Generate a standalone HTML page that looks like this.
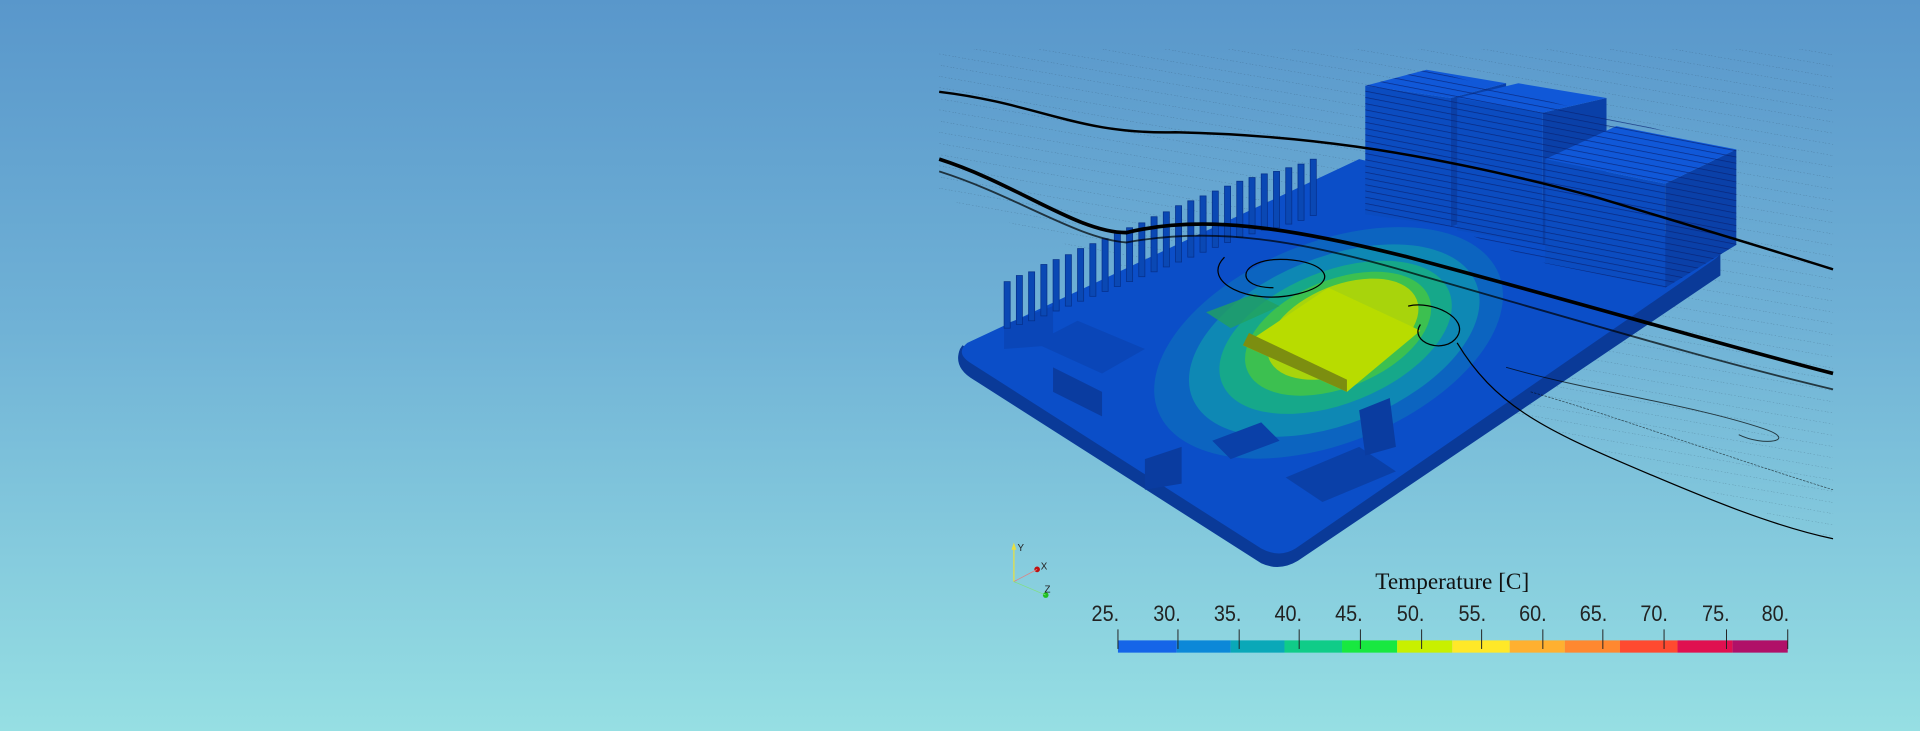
<!DOCTYPE html>
<html><head><meta charset="utf-8"><style>
html,body{margin:0;padding:0;width:1920px;height:731px;overflow:hidden;background:linear-gradient(180deg,#5997cb 0%,#70b2d6 45%,#96dfe3 100%);font-family:"Liberation Sans",sans-serif}
svg{position:absolute;left:0;top:0}
</style></head><body>
<svg width="1920" height="731" viewBox="0 0 1568 597" xmlns="http://www.w3.org/2000/svg">
<defs>
<pattern id="hl" width="8" height="9" patternUnits="userSpaceOnUse" patternTransform="rotate(10)">
<line x1="0" y1="0" x2="8" y2="0" stroke="#1a2a40" stroke-width="0.5" stroke-dasharray="1 2" opacity="0.6"/>
</pattern>
<pattern id="blk" width="10" height="5" patternUnits="userSpaceOnUse" patternTransform="rotate(11)">
<line x1="0" y1="0" x2="10" y2="0" stroke="#082070" stroke-width="1.2" opacity="0.8"/>
</pattern>
</defs>
<polygon points="767,40 1497,40 1497,440 767,160" fill="url(#hl)" opacity="0.7"/>
<!-- board sides -->
<path d="M784,285 Q778,300 795,310 L1030,460 Q1045,467 1060,458 L1405,225 L1405,205 L1045,448 L786,282 Z" fill="#0a3a98"/>
<!-- board top -->
<path d="M790,280 Q780,288 792,296 L1030,448 Q1045,456 1058,448 L1400,212 Q1410,205 1398,200 L1110,130 Z" fill="#0b4ec8"/>
<!-- heat contours -->
<g transform="rotate(-22 1085 280)">
<ellipse cx="1085" cy="280" rx="150" ry="82" fill="#0c64c0"/>
<ellipse cx="1090" cy="280" rx="125" ry="68" fill="#0e88b4"/>
<ellipse cx="1092" cy="278" rx="100" ry="54" fill="#16a88a"/>
<ellipse cx="1095" cy="276" rx="80" ry="44" fill="#3cc050"/>
<ellipse cx="1100" cy="274" rx="65" ry="36" fill="#a8d40c"/>
</g>
<!-- chip -->
<polygon points="1015,282 1085,235 1160,270 1100,320" fill="#b8dc00"/>
<polygon points="1015,282 1100,320 1100,310 1020,272" fill="#7c8e10"/>
<polygon points="985,255 1025,240 1045,250 1005,268" fill="#22a060" opacity="0.8"/>
<!-- small components -->
<polygon points="845,280 880,262 935,285 900,305" fill="#0a46b8"/>
<polygon points="860,300 900,320 900,340 860,320" fill="#0a3ca0"/>
<polygon points="935,375 965,365 965,395 935,400" fill="#0a3ca0"/>
<polygon points="1050,390 1110,365 1140,385 1080,410" fill="#0a40a8"/>
<polygon points="1110,335 1135,325 1140,365 1115,372" fill="#0a3ca0"/>
<polygon points="990,360 1030,345 1045,360 1005,375" fill="#0a40a8"/>
<polygon points="820,265 860,250 860,282 820,285" fill="#0a46b8"/>
<g fill="#0a48b4" stroke="#06308a" stroke-width="0.6">
<rect x="820" y="230" width="5" height="38"/><rect x="830" y="225" width="5" height="40"/><rect x="840" y="222" width="5" height="40"/><rect x="850" y="216" width="5" height="42"/><rect x="860" y="212" width="5" height="42"/><rect x="870" y="208" width="5" height="42"/><rect x="880" y="203" width="5" height="43"/><rect x="890" y="199" width="5" height="43"/><rect x="900" y="195" width="5" height="43"/><rect x="910" y="190" width="5" height="44"/><rect x="920" y="186" width="5" height="44"/><rect x="930" y="182" width="5" height="44"/><rect x="940" y="177" width="5" height="45"/><rect x="950" y="173" width="5" height="45"/><rect x="960" y="168" width="5" height="46"/><rect x="970" y="164" width="5" height="46"/><rect x="980" y="160" width="5" height="46"/><rect x="990" y="156" width="5" height="46"/><rect x="1000" y="152" width="5" height="46"/><rect x="1010" y="148" width="5" height="46"/><rect x="1020" y="145" width="5" height="46"/><rect x="1030" y="142" width="5" height="46"/><rect x="1040" y="140" width="5" height="46"/><rect x="1050" y="137" width="5" height="46"/><rect x="1060" y="134" width="5" height="46"/><rect x="1070" y="130" width="5" height="46"/>
</g>
<g>
<polygon points="1115,70 1185,80 1185,185 1115,175" fill="#0b4cc0"/>
<polygon points="1185,80 1230,68 1230,170 1185,185" fill="#0a40a8"/>
<polygon points="1115,70 1165,57 1230,68 1185,80" fill="#1058d8"/>
<polygon points="1190,80 1260,92 1260,200 1190,188" fill="#0b4cc0"/>
<polygon points="1260,92 1312,80 1312,180 1260,200" fill="#0a40a8"/>
<polygon points="1190,80 1240,68 1312,80 1260,92" fill="#1058d8"/>
<polygon points="1262,130 1360,150 1360,235 1262,215" fill="#0b4cc0"/>
<polygon points="1360,150 1418,122 1418,200 1360,235" fill="#0a40a8"/>
<polygon points="1262,130 1320,103 1418,122 1360,150" fill="#1058d8"/>
<polygon points="1115,70 1165,57 1418,122 1418,200 1360,235 1262,215 1190,188 1115,175" fill="url(#blk)"/>
</g>
<g fill="none" stroke="#000">
<path d="M767,75 C850,85 880,110 960,108 C1050,110 1150,120 1300,160 C1400,190 1450,205 1497,220" stroke-width="2"/>
<path d="M767,130 C830,150 880,190 920,190 C980,175 1050,185 1150,210 C1300,250 1400,280 1497,305" stroke-width="3"/>
<path d="M767,140 C830,160 880,195 920,198 C990,185 1060,195 1160,225 C1300,265 1400,295 1497,318" stroke-width="1.5" opacity="0.7"/>
<path d="M1000,210 C980,230 1020,250 1060,240 C1100,230 1080,210 1040,212 C1010,215 1010,235 1040,235" stroke-width="1"/>
<path d="M1150,250 C1170,245 1200,260 1190,275 C1180,290 1150,280 1160,265" stroke-width="1"/>
<path d="M1190,280 C1220,330 1260,350 1330,380 C1400,410 1450,430 1497,440" stroke-width="1"/>
<path d="M1230,300 C1300,320 1380,330 1440,350 C1470,360 1440,365 1420,355" stroke-width="0.8" opacity="0.7"/>
<path d="M1250,320 C1320,340 1400,370 1497,400" stroke-width="0.6" stroke-dasharray="2 1" opacity="0.6"/>
</g>
<line x1="828" y1="475" x2="828" y2="446" stroke="#e8e040" stroke-width="1"/>
<polygon points="826,449 828,443 830,449" fill="#e8e040"/>
<text x="831" y="450" font-size="8" fill="#222">Y</text>
<circle cx="847" cy="465" r="2.3" fill="#c01010"/><text x="850" y="465" font-size="8" fill="#222">X</text>
<circle cx="854" cy="486" r="2.3" fill="#20c020"/><text x="853" y="484" font-size="8" fill="#222">Z</text>
<line x1="828" y1="475" x2="847" y2="465" stroke="#e08080" stroke-width="0.6"/>
<line x1="828" y1="475" x2="854" y2="486" stroke="#80e080" stroke-width="0.6"/>
<text x="1186" y="481" font-size="19" fill="#111" text-anchor="middle" font-family="Liberation Serif">Temperature [C]</text>
<g font-size="18" fill="#222" text-anchor="middle" transform="scale(0.9 1)">
<text x="1003" y="507">25.</text><text x="1059" y="507">30.</text><text x="1114" y="507">35.</text><text x="1169" y="507">40.</text><text x="1224" y="507">45.</text><text x="1280" y="507">50.</text><text x="1336" y="507">55.</text><text x="1391" y="507">60.</text><text x="1446" y="507">65.</text><text x="1501" y="507">70.</text><text x="1557" y="507">75.</text><text x="1611" y="507">80.</text>
</g>
<g>
<rect x="913" y="523" width="48" height="10" fill="#1565e8"/>
<rect x="961" y="523" width="44" height="10" fill="#0c88d8"/>
<rect x="1005" y="523" width="44" height="10" fill="#0aa8b8"/>
<rect x="1049" y="523" width="47" height="10" fill="#10cc88"/>
<rect x="1096" y="523" width="45" height="10" fill="#18e840"/>
<rect x="1141" y="523" width="45" height="10" fill="#c8f000"/>
<rect x="1186" y="523" width="47" height="10" fill="#ffe828"/>
<rect x="1233" y="523" width="45" height="10" fill="#ffb030"/>
<rect x="1278" y="523" width="45" height="10" fill="#ff8830"/>
<rect x="1323" y="523" width="47" height="10" fill="#ff4a30"/>
<rect x="1370" y="523" width="45" height="10" fill="#e01050"/>
<rect x="1415" y="523" width="45" height="10" fill="#b01068"/>
</g>
<g stroke="#222" stroke-width="0.8">
<line x1="913" y1="514" x2="913" y2="530"/><line x1="962" y1="514" x2="962" y2="530"/><line x1="1012" y1="514" x2="1012" y2="530"/><line x1="1061" y1="514" x2="1061" y2="530"/><line x1="1111" y1="514" x2="1111" y2="530"/><line x1="1161" y1="514" x2="1161" y2="530"/><line x1="1210" y1="514" x2="1210" y2="530"/><line x1="1260" y1="514" x2="1260" y2="530"/><line x1="1309" y1="514" x2="1309" y2="530"/><line x1="1359" y1="514" x2="1359" y2="530"/><line x1="1410" y1="514" x2="1410" y2="530"/><line x1="1460" y1="514" x2="1460" y2="530"/>
</g>
</svg>
</body></html>
